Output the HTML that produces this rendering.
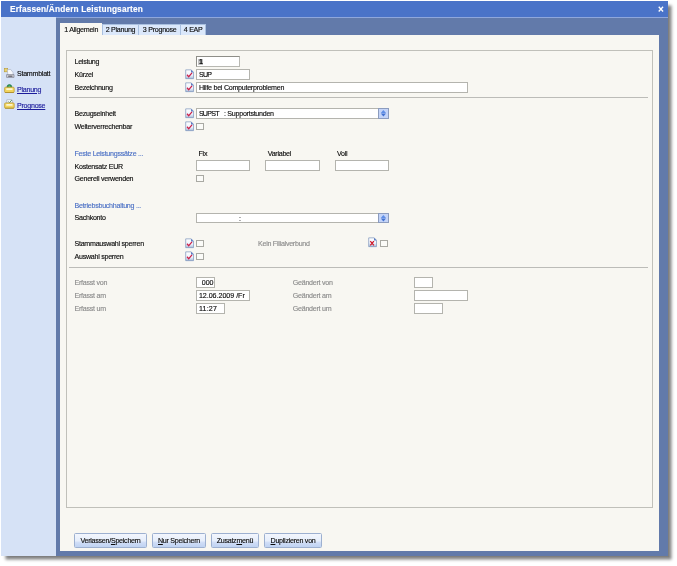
<!DOCTYPE html>
<html lang="de">
<head>
<meta charset="utf-8">
<title>Erfassen/Ändern Leistungsarten</title>
<style>
html,body{margin:0;padding:0;background:#fff;}
body{width:677px;height:566px;position:relative;overflow:hidden;font-family:"Liberation Sans","DejaVu Sans",sans-serif;font-size:7.1px;letter-spacing:-0.26px;color:#0c0c0c;}
#all,#txt{position:absolute;left:0;top:0;width:677px;height:566px;}
#txt{will-change:transform;-webkit-text-stroke:0.14px;}
#all div,#all svg,#txt div{position:absolute;box-sizing:border-box;}
#win{left:1.4px;top:1.4px;width:666.3px;height:555.1px;background:#627aaa;box-shadow:3.8px 3.8px 3px rgba(0,0,0,0.5);}
#title{left:1.4px;top:1.4px;width:666.3px;height:15.4px;background:#4a73c8;}
#tline{left:1.4px;top:16.5px;width:666.3px;height:0.9px;background:#8fa7dc;}
#ttext{left:10px;top:2.6px;font-weight:bold;font-size:8.3px;line-height:12px;color:#fff;letter-spacing:0.16px;white-space:nowrap;}
#side{left:1.4px;top:17.4px;width:54.6px;height:539.1px;background:#d6e2f6;}
.nav{font-size:7.1px;line-height:10px;white-space:nowrap;color:#0c0c0c;}
.nav.l{color:#1c1c9c;text-decoration:underline;}
#panel{left:60px;top:35.3px;width:599.2px;height:515.7px;background:#f8f7f2;}
.tab{background:#dbe8fb;border:0.8px solid #a9c0e0;border-bottom:none;font-size:7.1px;text-align:center;white-space:nowrap;color:#0c0c0c;}
.tab.act{background:#f8f7f2;border-color:#f8f7f2;}
.grp{border:0.8px solid #c0c0ba;}
.sep{background:#bcbcb8;}
.lb{font-size:7.1px;white-space:nowrap;line-height:10px;color:#0c0c0c;}
.lb.b{color:#4a6fc4;}
.lb.g{color:#8c8c8c;}
.in{border:0.8px solid #b4b4ae;background:#fff;font-size:7.1px;padding-left:1.6px;padding-top:1.1px;white-space:nowrap;color:#0c0c0c;}
.cb{border:0.75px solid #a9a9a3;background:#fbfbf8;}
.cmb{background:#c4d4f8;border:0.7px solid #8c9cbe;}
.btn{border:0.75px solid #9db0d0;border-radius:1.5px;background:linear-gradient(#f3f6fd 0%,#e6eefb 52%,#cfddf6 66%,#c0d3f2 100%);font-size:7.1px;text-align:center;white-space:nowrap;color:#0c0c0c;}
#txt .tx{background:none;border-color:transparent;}
u{text-decoration:underline;}
</style>
</head>
<body>
<div id="all">
<div id="win"></div><div id="title"></div><div id="tline"></div>
<svg style="left:657.8px;top:5.8px;width:5.8px;height:6.2px" viewBox="0 0 8 8" preserveAspectRatio="none"><path d="M1 1 L7 7 M7 1 L1 7" stroke="#fff" stroke-width="1.9" fill="none"/></svg>
<div id="side"></div>
<svg style="left:3.6px;top:67.6px;width:11px;height:10.5px" viewBox="0 0 11 10.5">
<rect x="0.5" y="0.6" width="3.2" height="3.2" fill="#efd468" stroke="#b59a34" stroke-width="0.6"/>
<path d="M3.2 1.8 L6.6 1.4 L9 4.4 L9.2 7.4 L4 7.4 Z" fill="#f8f9fc" stroke="#a4acc0" stroke-width="0.6"/>
<path d="M2.6 6.6 L10 6.6 L10 9.4 L2.6 9.4 Z" fill="#d4d5dc" stroke="#6e707c" stroke-width="0.6"/>
<rect x="4.2" y="7.7" width="4.2" height="0.9" fill="#3c3c44"/>
</svg>
<svg style="left:3.6px;top:83.8px;width:11px;height:9.4px" viewBox="0 0 11 9.4"><path d="M2.8 3.4 Q3 0.5 5.4 0.5 Q7.8 0.5 8 3.4 Z" fill="#2f9a5a" stroke="#1d6e3c" stroke-width="0.6"/><path d="M4.4 2.4 Q5.4 1.2 6.4 2.4 Z" fill="#8fd8a8"/><path d="M1.6 3.2 L9.2 3.2 Q10.2 3.2 10.2 4.2 L10.2 7.6 Q10.2 8.6 9.2 8.6 L1.6 8.6 Q0.6 8.6 0.6 7.6 L0.6 4.2 Q0.6 3.2 1.6 3.2 Z" fill="#f2d55e" stroke="#b8962c" stroke-width="0.7"/>
<rect x="2.2" y="4.3" width="6.4" height="1.7" rx="0.4" fill="#fdf6cf"/>
<path d="M1 8.5 L9.8 8.5" stroke="#a98522" stroke-width="0.7"/></svg>
<svg style="left:3.6px;top:99px;width:11px;height:10px" viewBox="0 0 11 10"><path d="M2.8 4.2 L2.8 0.8 L7.6 0.5 L8.6 1.4 L8.6 4.2 Z" fill="#f6f8fa" stroke="#9aa4b2" stroke-width="0.6"/><path d="M4.4 2.6 L5.6 3.6 L7.8 1" stroke="#4a8a60" stroke-width="0.9" fill="none"/><path d="M1.6 3.9 L9.2 3.9 Q10.2 3.9 10.2 4.9 L10.2 8.3 Q10.2 9.3 9.2 9.3 L1.6 9.3 Q0.6 9.3 0.6 8.3 L0.6 4.9 Q0.6 3.9 1.6 3.9 Z" fill="#f2d55e" stroke="#b8962c" stroke-width="0.7"/>
<rect x="2.2" y="5" width="6.4" height="1.7" rx="0.4" fill="#fdf6cf"/>
<path d="M1 9.2 L9.8 9.2" stroke="#a98522" stroke-width="0.7"/></svg>
<div class="tab" style="left:101.6px;top:24.2px;width:37.8px;height:11.4px;line-height:11px"></div>
<div class="tab" style="left:139.4px;top:24.2px;width:41.6px;height:11.4px;line-height:11px;border-left:none"></div>
<div class="tab" style="left:181.0px;top:24.2px;width:25.3px;height:11.4px;line-height:11px;border-left:none"></div>
<div id="panel"></div>
<div class="tab act" style="left:60.0px;top:22.6px;width:41.6px;height:13.4px;line-height:13.2px;padding-left:0.8px"></div>
<div class="grp" style="left:66.0px;top:49.6px;width:587.0px;height:458.4px;"></div>
<div class="sep" style="left:68.7px;top:97.3px;width:579.8px;height:1.0px;"></div>
<div class="sep" style="left:68.7px;top:267.4px;width:579.8px;height:1.1px;"></div>
<div class="in" style="left:196.3px;top:56.0px;width:43.5px;height:10.6px;line-height:9.6px;border-color:#8e8e88 #b8b8b2 #b8b8b2 #8e8e88;"><div style="left:1.1px;top:1.6px;width:4.7px;height:6.8px;background:#c4c4c4"></div></div>
<div class="in" style="left:196.3px;top:69.1px;width:53.5px;height:10.6px;line-height:9.6px;letter-spacing:-0.7px;"></div>
<div class="in" style="left:196.3px;top:82.0px;width:272.1px;height:10.6px;line-height:9.6px;"></div>
<div class="in" style="left:196.3px;top:108.2px;width:192.6px;height:10.4px;line-height:9.4px;"></div>
<div class="cmb" style="left:377.9px;top:108.2px;width:11.0px;height:10.4px;"><svg style="left:-0.8px;top:-0.8px;width:11px;height:10.4px" viewBox="0 0 11 10.4"><path d="M2.8 5.1 L5.4 2.1 L8 5.1 Z" fill="#5f8ee6"/><path d="M2.8 5.5 L5.4 8.5 L8 5.5 Z" fill="#4272d2"/></svg></div>
<div class="in" style="left:196.3px;top:160.4px;width:53.7px;height:10.6px;line-height:9.6px;"></div>
<div class="in" style="left:265.4px;top:160.4px;width:54.4px;height:10.6px;line-height:9.6px;"></div>
<div class="in" style="left:335.0px;top:160.4px;width:53.6px;height:10.6px;line-height:9.6px;"></div>
<div class="in" style="left:196.3px;top:212.5px;width:192.6px;height:10.4px;line-height:9.4px;"></div>
<div class="cmb" style="left:377.9px;top:212.5px;width:11.0px;height:10.4px;"><svg style="left:-0.8px;top:-0.8px;width:11px;height:10.4px" viewBox="0 0 11 10.4"><path d="M2.8 5.1 L5.4 2.1 L8 5.1 Z" fill="#5f8ee6"/><path d="M2.8 5.5 L5.4 8.5 L8 5.5 Z" fill="#4272d2"/></svg></div>
<div class="in" style="left:196.3px;top:277.3px;width:18.7px;height:10.7px;line-height:9.7px;padding-left:4.4px;letter-spacing:0;"></div>
<div class="in" style="left:196.3px;top:290.2px;width:53.7px;height:10.9px;line-height:9.9px;letter-spacing:-0.02px;"></div>
<div class="in" style="left:196.3px;top:303.3px;width:28.6px;height:10.9px;line-height:9.9px;letter-spacing:0.2px;"></div>
<div class="in" style="left:414.3px;top:277.3px;width:18.7px;height:10.7px;line-height:9.7px;"></div>
<div class="in" style="left:414.3px;top:290.2px;width:54.0px;height:10.9px;line-height:9.9px;"></div>
<div class="in" style="left:414.3px;top:303.3px;width:28.8px;height:10.9px;line-height:9.9px;"></div>
<div class="cb" style="left:196.2px;top:123.4px;width:8.0px;height:6.7px;"></div>
<div class="cb" style="left:196.2px;top:175.2px;width:8.0px;height:6.7px;"></div>
<div class="cb" style="left:196.2px;top:240.0px;width:8.0px;height:6.7px;"></div>
<div class="cb" style="left:196.2px;top:253.0px;width:8.0px;height:6.7px;"></div>
<div class="cb" style="left:379.6px;top:240.0px;width:8.0px;height:6.7px;"></div>
<svg style="left:185.1px;top:69.3px;width:9.2px;height:10.6px" viewBox="0 0 9.2 10" preserveAspectRatio="none"><use href="#doc"/></svg>
<svg style="left:185.1px;top:82.3px;width:9.2px;height:10.6px" viewBox="0 0 9.2 10" preserveAspectRatio="none"><use href="#doc"/></svg>
<svg style="left:185.1px;top:108.2px;width:9.2px;height:10.6px" viewBox="0 0 9.2 10" preserveAspectRatio="none"><use href="#doc"/></svg>
<svg style="left:185.1px;top:121.1px;width:9.2px;height:10.6px" viewBox="0 0 9.2 10" preserveAspectRatio="none"><use href="#doc"/></svg>
<svg style="left:185.1px;top:238.2px;width:9.2px;height:10.6px" viewBox="0 0 9.2 10" preserveAspectRatio="none"><use href="#doc"/></svg>
<svg style="left:185.1px;top:251.1px;width:9.2px;height:10.6px" viewBox="0 0 9.2 10" preserveAspectRatio="none"><use href="#doc"/></svg>
<svg style="left:368.2px;top:237.0px;width:9.2px;height:10.6px" viewBox="0 0 9.2 10" preserveAspectRatio="none"><use href="#docx"/></svg>
<div class="btn" style="left:74.2px;top:533.3px;width:72.6px;height:14.5px;line-height:14.2px"></div>
<div class="btn" style="left:152.4px;top:533.3px;width:53.2px;height:14.5px;line-height:14.2px"></div>
<div class="btn" style="left:211.0px;top:533.3px;width:47.8px;height:14.5px;line-height:14.2px"></div>
<div class="btn" style="left:264.2px;top:533.3px;width:57.7px;height:14.5px;line-height:14.2px"></div>
<svg width="0" height="0" style="left:0;top:0">
<defs>
<linearGradient id="pg" x1="0" y1="0" x2="0" y2="1"><stop offset="0" stop-color="#ffffff"/><stop offset="0.6" stop-color="#eef4fd"/><stop offset="1" stop-color="#a9bcd8"/></linearGradient>
<g id="page">
<path d="M0.7 0.8 L6.2 0.8 L8.5 3 L8.5 9.1 L0.7 9.1 Z" fill="url(#pg)" stroke="#7d95bc" stroke-width="0.7"/>
<path d="M6.1 0.7 L8.7 3.2 L6.1 3.2 Z" fill="#5478c0"/>
</g>
<g id="doc"><use href="#page"/><path d="M2 5.4 L3.7 7.3 L7 3.6" stroke="#cc1f48" stroke-width="1.2" fill="none"/></g>
<g id="docx"><use href="#page"/><path d="M2.3 3.9 L5.9 7.9 M5.9 3.9 L2.3 7.9" stroke="#d01828" stroke-width="1.3" fill="none"/></g>
</defs></svg>
</div>
<div id="txt">
<div id="ttext">Erfassen/Ändern Leistungsarten</div>
<div class="nav" style="left:17px;top:68.5px">Stammblatt</div>
<div class="nav l" style="left:17px;top:84.6px">Planung</div>
<div class="nav l" style="left:17px;top:101.2px">Prognose</div>
<div class="tab tx" style="left:101.6px;top:24.2px;width:37.8px;height:11.4px;line-height:11px">2 Planung</div>
<div class="tab tx" style="left:139.4px;top:24.2px;width:41.6px;height:11.4px;line-height:11px;border-left:none">3 Prognose</div>
<div class="tab tx" style="left:181.0px;top:24.2px;width:25.3px;height:11.4px;line-height:11px;border-left:none">4 EAP</div>
<div class="tab act tx" style="left:60.0px;top:22.6px;width:41.6px;height:13.4px;line-height:13.2px;padding-left:0.8px">1 Allgemein</div>
<div class="lb" style="left:74.5px;top:57.0px;">Leistung</div>
<div class="lb" style="left:74.5px;top:70.1px;">Kürzel</div>
<div class="lb" style="left:74.5px;top:83.0px;">Bezeichnung</div>
<div class="lb" style="left:74.5px;top:108.7px;">Bezugseinheit</div>
<div class="lb" style="left:74.5px;top:122.1px;">Weiterverrechenbar</div>
<div class="lb b" style="left:74.5px;top:149.0px;">Feste Leistungssätze ...</div>
<div class="lb" style="left:74.5px;top:161.7px;">Kostensatz EUR</div>
<div class="lb" style="left:74.5px;top:174.4px;">Generell verwenden</div>
<div class="lb b" style="left:74.5px;top:201.0px;">Betriebsbuchhaltung ...</div>
<div class="lb" style="left:74.5px;top:213.4px;">Sachkonto</div>
<div class="lb" style="left:74.5px;top:239.3px;">Stammauswahl sperren</div>
<div class="lb" style="left:74.5px;top:251.9px;">Auswahl sperren</div>
<div class="lb g" style="left:74.5px;top:277.5px;">Erfasst von</div>
<div class="lb g" style="left:74.5px;top:290.7px;">Erfasst am</div>
<div class="lb g" style="left:74.5px;top:303.5px;">Erfasst um</div>
<div class="lb" style="left:198.5px;top:149.1px;">Fix</div>
<div class="lb" style="left:267.7px;top:149.1px;">Variabel</div>
<div class="lb" style="left:337.0px;top:149.1px;">Voll</div>
<div class="lb g" style="left:258.0px;top:238.9px;">Kein Filialverbund</div>
<div class="lb g" style="left:292.8px;top:277.5px;">Geändert von</div>
<div class="lb g" style="left:292.8px;top:290.7px;">Geändert am</div>
<div class="lb g" style="left:292.8px;top:303.5px;">Geändert um</div>
<div class="in tx" style="left:196.3px;top:56.0px;width:43.5px;height:10.6px;line-height:9.6px;border-color:#8e8e88 #b8b8b2 #b8b8b2 #8e8e88;"><b>1</b></div>
<div class="in tx" style="left:196.3px;top:69.1px;width:53.5px;height:10.6px;line-height:9.6px;letter-spacing:-0.7px;">SUP</div>
<div class="in tx" style="left:196.3px;top:82.0px;width:272.1px;height:10.6px;line-height:9.6px;">Hilfe bei Computerproblemen</div>
<div class="in tx" style="left:196.3px;top:108.2px;width:192.6px;height:10.4px;line-height:9.4px;"><span style="letter-spacing:-0.75px">SUPST</span>&nbsp;&nbsp;&nbsp;: Supportstunden</div>
<div class="in tx" style="left:196.3px;top:212.5px;width:192.6px;height:10.4px;line-height:9.4px;"><span style="position:absolute;left:41.6px">:</span></div>
<div class="in tx" style="left:196.3px;top:277.3px;width:18.7px;height:10.7px;line-height:9.7px;padding-left:4.4px;letter-spacing:0;">000</div>
<div class="in tx" style="left:196.3px;top:290.2px;width:53.7px;height:10.9px;line-height:9.9px;letter-spacing:-0.02px;">12.06.2009 /Fr</div>
<div class="in tx" style="left:196.3px;top:303.3px;width:28.6px;height:10.9px;line-height:9.9px;letter-spacing:0.2px;">11:27</div>
<div class="btn tx" style="left:74.2px;top:533.3px;width:72.6px;height:14.5px;line-height:14.2px">Verlassen/<u>S</u>peichern</div>
<div class="btn tx" style="left:152.4px;top:533.3px;width:53.2px;height:14.5px;line-height:14.2px"><u>N</u>ur Speichern</div>
<div class="btn tx" style="left:211.0px;top:533.3px;width:47.8px;height:14.5px;line-height:14.2px">Zusatz<u>m</u>enü</div>
<div class="btn tx" style="left:264.2px;top:533.3px;width:57.7px;height:14.5px;line-height:14.2px"><u>D</u>uplizieren von</div>
</div>
</body>
</html>
